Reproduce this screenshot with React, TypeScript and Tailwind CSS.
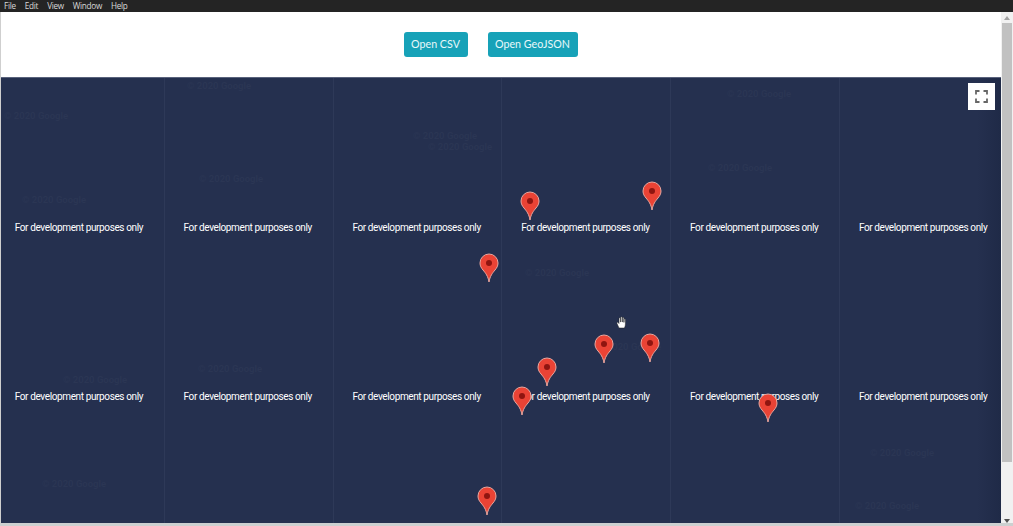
const pins = [
  { x: 530, y: 191 }, { x: 652, y: 181 }, { x: 489, y: 253 }, { x: 604, y: 334 }, { x: 650, y: 333 },
  { x: 547, y: 357 }, { x: 522, y: 386 }, { x: 768, y: 393 }, { x: 487, y: 486 },
];
const marks = [
  [186, 1], [3, 31], [412, 51], [427, 62], [198, 94], [21, 115], [726, 9], [707, 83],
  [524, 188], [197, 284], [62, 295], [41, 399], [869, 368], [854, 421], [596, 262],
];
const xs = [0, 1, 2, 3, 4, 5];

function Pin({ x, y }: { x: number; y: number }) {
  return (
    <svg className="absolute" style={{ left: x - 11, top: y - 78 }} width="20" height="30" viewBox="0 0 20 30">
      <path d="M10 29C9 23 6.500 20 4 17 2.300 15 1 13 1 10a9 9 0 0 1 18 0c0 3-1.300 5-3 7-2.500 3-5 6-6 12z" fill="#ea4335" stroke="#e8a79f" strokeWidth="1" />
      <circle cx="10" cy="10" r="3" fill="#8f1510" />
    </svg>
  );
}

export default function App() {
  return (
    <div className="flex h-[526px] w-[1013px] flex-col overflow-hidden bg-[#ccd0d0]">
      <nav className="flex h-3 shrink-0 items-center gap-[9px] bg-[#242424] pl-1 font-['Open_Sans',sans-serif] text-[8.200px] tracking-[-0.3px] text-[#d8d8d8]">
        <span>File</span><span>Edit</span><span>View</span><span>Window</span><span>Help</span>
      </nav>
      <div className="flex h-[511px] shrink-0">
        <main className="flex w-[1001px] flex-col border-l border-[#cfcfcf]">
          <header className="flex h-[65px] shrink-0 items-center justify-center gap-5 bg-white pr-[21px] font-['Lato',sans-serif] text-[10.700px] whitespace-nowrap text-[#e8f8fa]">
            <button className="h-[25px] w-16 rounded-[3px] bg-[#17a2b8]">Open CSV</button>
            <button className="h-[25px] w-[90px] rounded-[3px] bg-[#17a2b8]">Open GeoJSON</button>
          </header>
          <section className="relative flex-1 overflow-hidden border-t border-[#59627c] bg-[#25304f] font-['Roboto',sans-serif]">
            <div className="absolute right-0 top-0 h-full w-6 bg-gradient-to-l from-[#1f2a47] to-transparent" />
            <div className="absolute -left-[5px] top-0 grid h-full w-[1013px] grid-cols-6">
              {xs.map((i) => (
                <div key={i} className="flex flex-col border-r border-[#2e3958] pr-[2px] pt-[142px] text-center text-[10px] tracking-[-0.38px] text-white">
                  <span className="h-[169px] leading-[16px]">For development purposes only</span>
                  <span className="leading-[16px]">For development purposes only</span>
                </div>
              ))}
            </div>
            {marks.map(([x, y], i) => (
              <span key={i} className="absolute text-[9.500px] font-semibold whitespace-nowrap text-[#2b3654]" style={{ left: x, top: y }}>
                © 2020 Google
              </span>
            ))}
            {pins.map((p, i) => <Pin key={i} {...p} />)}
            <svg className="absolute left-[615px] top-[238px]" width="12" height="13" viewBox="0 0 12 13">
              <path d="M3 12 1 7.500c-.5-1 .7-1.500 1.300-.8L3 7.500V2.500c0-1 1.300-1 1.400 0V6h.3V1.500c0-1 1.400-1 1.400 0V6h.3V2c0-1 1.400-1 1.400 0v4.300h.3V3.500c0-1 1.300-1 1.300 0V8c0 2-.7 3-1 4z" fill="#fff" stroke="#222" strokeWidth=".5" />
            </svg>
            <button className="absolute left-[967px] top-[5px] flex h-[27px] w-[27px] items-center justify-center bg-white">
              <svg width="13" height="13" viewBox="0 0 13 13" fill="none" stroke="#666" strokeWidth="1.800">
                <path d="M1 4.500V1h3.500M8.500 1H12v3.500M12 8.500V12H8.500M4.500 12H1V8.500" />
              </svg>
            </button>
          </section>
        </main>
        <aside className="relative w-3 bg-[#f1f1f1]">
          <div className="absolute left-[3px] top-[4px] h-0 w-0 border-x-[3px] border-b-[4px] border-x-transparent border-b-[#a3a3a3]" />
          <div className="absolute left-px top-[11px] h-[439px] w-[10px] bg-[#c1c1c1]" />
          <div className="absolute left-[3px] bottom-0 h-0 w-0 border-x-[3px] border-t-[4px] border-x-transparent border-t-[#505050]" />
        </aside>
      </div>
      <div className="h-[3px] w-[1001px] bg-[#ccd0d0]" />
    </div>
  );
}
